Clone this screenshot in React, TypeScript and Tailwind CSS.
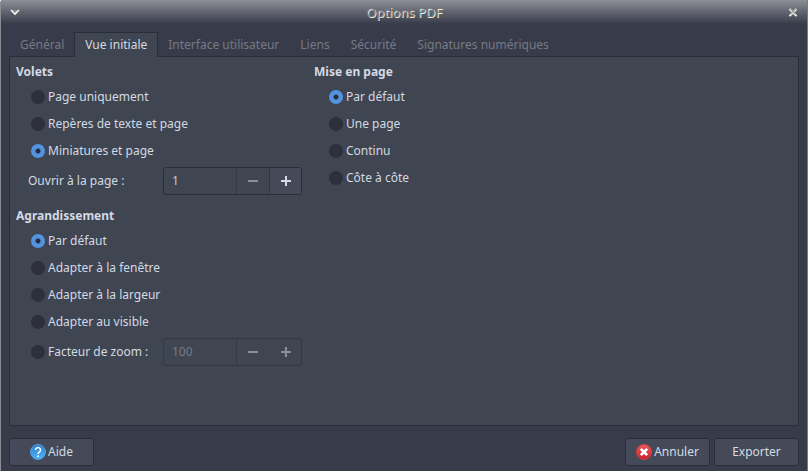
import { useState } from 'react'
import type { ReactNode } from 'react'

const TABS = ['Général', 'Vue initiale', 'Interface utilisateur', 'Liens', 'Sécurité', 'Signatures numériques']

interface RadioProps {
  name: string
  label: string
  checked: boolean
  onSelect: () => void
}

function Radio({ name, label, checked, onSelect }: RadioProps) {
  return (
    <label className="flex h-[27px] items-center gap-[3px]">
      <input
        type="radio"
        name={name}
        checked={checked}
        onChange={onSelect}
        className="size-[14px] shrink-0 appearance-none rounded-full bg-[#2d303b] checked:bg-[radial-gradient(circle,#2b2e39_2px,#5294e2_3px)]"
      />
      {label}
    </label>
  )
}

interface RadioGroupProps {
  name: string
  options: string[]
  value: string
  onChange: (value: string) => void
}

function RadioGroup({ name, options, value, onChange }: RadioGroupProps) {
  return (
    <>
      {options.map((option) => (
        <Radio
          key={option}
          name={name}
          label={option}
          checked={value === option}
          onSelect={() => onChange(option)}
        />
      ))}
    </>
  )
}

interface SpinBoxProps {
  label: string
  value: number
  min: number
  disabled?: boolean
  onChange: (value: number) => void
}

function SpinBox({ label, value, min, disabled = false, onChange }: SpinBoxProps) {
  return (
    <div
      className={`flex h-7 w-[139px] shrink-0 rounded-[3px] border ${
        disabled ? 'border-[#343844]' : 'border-[#2b2e39]'
      }`}
    >
      <input
        type="text"
        aria-label={label}
        value={value}
        disabled={disabled}
        onChange={(e) => onChange(Number(e.target.value) || min)}
        className="w-[72px] px-2 text-[#c4cad3] outline-none disabled:text-[#757b86]"
      />
      <button
        type="button"
        aria-label="Diminuer"
        disabled={disabled || value <= min}
        onClick={() => onChange(value - 1)}
        className="flex w-[33px] items-center justify-center border-l border-[#343844] text-[#d3dae3] disabled:text-[#8a909b]"
      >
        <svg className="size-3" viewBox="0 0 12 12" fill="currentColor">
          <path d="M1 5h10v2H1z" />
        </svg>
      </button>
      <button
        type="button"
        aria-label="Augmenter"
        disabled={disabled}
        onClick={() => onChange(value + 1)}
        className={`flex flex-1 items-center justify-center border-l text-[#d3dae3] disabled:text-[#8a909b] ${
          disabled ? 'border-transparent' : 'rounded-r-[2px] border-[#343844] bg-[#444a58]'
        }`}
      >
        <svg className="size-3" viewBox="0 0 12 12" fill="currentColor">
          <path d="M5 1h2v4h4v2H7v4H5V7H1V5h4z" />
        </svg>
      </button>
    </div>
  )
}

function DialogButton({ children }: { children: ReactNode }) {
  return (
    <button
      type="button"
      className="flex h-7 w-[85px] items-center justify-center gap-[2px] rounded-[3px] border border-[#2b2e39] bg-[#444a58]"
    >
      {children}
    </button>
  )
}

function Heading({ children }: { children: ReactNode }) {
  return <h2 className="flex h-[23px] items-center font-bold">{children}</h2>
}

function App() {
  const [tab, setTab] = useState('Vue initiale')
  const [panes, setPanes] = useState('Miniatures et page')
  const [zoom, setZoom] = useState('Par défaut')
  const [layout, setLayout] = useState('Par défaut')
  const [page, setPage] = useState(1)
  const [factor, setFactor] = useState(100)

  return (
    <div className="flex min-h-screen flex-col rounded-tl-[3px] border-x border-r-[#777a80] border-l-[#8b8d92] bg-[#383c4a] font-['Noto_Sans',sans-serif] text-[12px] leading-5 text-[#d3dae3]">
      {/* Title bar */}
      <header className="flex h-6 items-center justify-between bg-linear-to-b from-[#8e9097] to-[#383c4a] px-2">
        <button type="button" aria-label="Menu de la fenêtre">
          <svg className="size-3" viewBox="0 0 12 12" fill="none">
            <path d="M3 4h6L6 7z" fill="#8b8c88" />
            <path d="M2 4l4 4 4-4" stroke="#f6f6f0" strokeWidth="1.6" />
          </svg>
        </button>
        <h1 className="text-[13px] text-[#77787c] [text-shadow:1px_1px_0_#f0efdf]">Options PDF</h1>
        <button type="button" aria-label="Fermer">
          <svg className="size-3" viewBox="0 0 12 12" fill="none">
            <path d="M2.500 3l7 7M9.500 3l-7 7" stroke="#f6f6f0" strokeWidth="2" />
            <path d="M3 2.500l6 6M9 2.500l-6 6" stroke="#a2a39f" strokeWidth="1.500" />
          </svg>
        </button>
      </header>

      <div className="flex flex-1 flex-col px-2 pt-2">
        {/* Tabs */}
        <div role="tablist" className="z-10 -mb-px flex pl-px">
          {TABS.map((name) => (
            <button
              key={name}
              type="button"
              role="tab"
              aria-selected={tab === name}
              onClick={() => setTab(name)}
              className={`-ml-px h-[25px] border border-b-0 px-[10px] pb-px ${
                tab === name
                  ? 'border-[#2b2e39] bg-[#404552]'
                  : 'border-transparent text-[#757a84]'
              }`}
            >
              {name}
            </button>
          ))}
        </div>

        <main className="flex flex-1 items-start gap-3 border border-[#2b2e39] bg-[#404552] px-[6px] pt-[3px]">
          <div className="w-[286px]">
            <section>
              <Heading>Volets</Heading>
              <div className="pl-[15px]">
                <RadioGroup
                  name="panes"
                  options={['Page uniquement', 'Repères de texte et page', 'Miniatures et page']}
                  value={panes}
                  onChange={setPanes}
                />
              </div>
              <div className="flex h-[34px] items-center justify-between pl-3">
                <span>Ouvrir à la page :</span>
                <SpinBox label="Ouvrir à la page" value={page} min={1} onChange={setPage} />
              </div>
            </section>

            <section className="mt-[6px]">
              <Heading>Agrandissement</Heading>
              <div className="pl-[15px]">
                <RadioGroup
                  name="zoom"
                  options={['Par défaut', 'Adapter à la fenêtre', 'Adapter à la largeur', 'Adapter au visible']}
                  value={zoom}
                  onChange={setZoom}
                />
                <div className="flex h-[34px] items-center justify-between">
                  <Radio
                    name="zoom"
                    label="Facteur de zoom :"
                    checked={zoom === 'factor'}
                    onSelect={() => setZoom('factor')}
                  />
                  <SpinBox
                    label="Facteur de zoom"
                    value={factor}
                    min={50}
                    disabled={zoom !== 'factor'}
                    onChange={setFactor}
                  />
                </div>
              </div>
            </section>
          </div>

          <section>
            <Heading>Mise en page</Heading>
            <div className="pl-[15px]">
              <RadioGroup
                name="layout"
                options={['Par défaut', 'Une page', 'Continu', 'Côte à côte']}
                value={layout}
                onChange={setLayout}
              />
            </div>
          </section>
        </main>

        {/* Dialog buttons */}
        <footer className="flex gap-1 pt-3 pb-[5px]">
          <DialogButton>
            <svg className="size-4" viewBox="0 0 16 16">
              <defs>
                <linearGradient id="help" x1="0" y1="0" x2="0" y2="1">
                  <stop offset="0" stopColor="#2f7fd0" />
                  <stop offset="1" stopColor="#4fb4f6" />
                </linearGradient>
              </defs>
              <circle cx="8" cy="8" r="7.5" fill="url(#help)" stroke="#4a9be0" />
              <path d="M5.500 6a2.500 2.400 0 1 1 3.800 2C8.300 8.700 8 9 8 10" fill="none" stroke="#fff" strokeWidth="1.500" />
              <circle cx="8" cy="12.200" r="1" fill="#fff" />
            </svg>
            Aide
          </DialogButton>
          <div className="flex-1" />
          <DialogButton>
            <svg className="size-4" viewBox="0 0 16 16">
              <defs>
                <linearGradient id="cancel" x1="0" y1="0" x2="0" y2="1">
                  <stop offset="0" stopColor="#e8605c" />
                  <stop offset="1" stopColor="#cc1f2e" />
                </linearGradient>
              </defs>
              <circle cx="8" cy="8" r="7.500" fill="url(#cancel)" stroke="#d83a42" />
              <path d="M4.800 4.800l6.400 6.400M11.200 4.800l-6.400 6.400" stroke="#fff" strokeWidth="2.600" />
            </svg>
            Annuler
          </DialogButton>
          <DialogButton>Exporter</DialogButton>
        </footer>
      </div>
    </div>
  )
}

export default App
